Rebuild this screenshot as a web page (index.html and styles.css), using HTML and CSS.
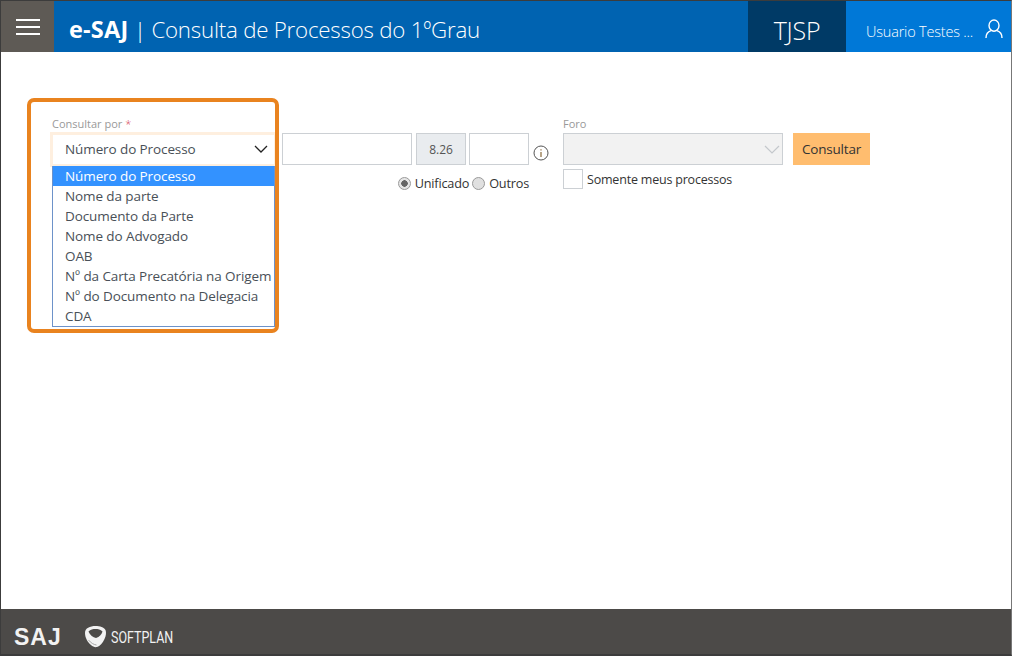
FILE: index.html
```html
<!DOCTYPE html>
<html lang="pt">
<head>
<meta charset="utf-8">
<title>e-SAJ</title>
<link rel="stylesheet" href="styles.css">
</head>
<body>
<div class="window">
  <header class="topbar">
    <button class="menu-btn" aria-label="Menu"><span></span><span></span><span></span></button>
    <h1 class="title"><b>e-SAJ</b> | Consulta de Processos do 1ºGrau</h1>
    <div class="court">TJSP</div>
    <div class="user">
      <span class="user-name">Usuario Testes ...</span>
      <svg class="user-icon" width="18" height="20" viewBox="0 0 18 20" fill="none" stroke="#fff" stroke-width="1.4"><ellipse cx="9" cy="6.6" rx="5" ry="5.6"/><path d="M1 19c0-4.200 2.800-6.600 5-7.300M17 19c0-4.200-2.800-6.600-5-7.300"/></svg>
    </div>
  </header>

  <main class="content">
    <form class="search">
      <div class="field field-type">
        <label class="label">Consultar por <em>*</em></label>
        <div class="select select-open">
          <span>Número do Processo</span>
          <svg width="14" height="8" viewBox="0 0 14 8" fill="none" stroke="#222" stroke-width="1.3"><path d="M1 1l6 6 6-6"/></svg>
        </div>
        <ul class="dropdown">
          <li class="active">Número do Processo</li>
          <li>Nome da parte</li>
          <li>Documento da Parte</li>
          <li>Nome do Advogado</li>
          <li>OAB</li>
          <li>Nº da Carta Precatória na Origem</li>
          <li>Nº do Documento na Delegacia</li>
          <li>CDA</li>
        </ul>
      </div>

      <div class="field field-number">
        <div class="number-row">
          <div class="input input-main"></div>
          <div class="input input-fixed">8.26</div>
          <div class="input input-end"></div>
          <svg class="info" width="16" height="16" viewBox="0 0 16 16" fill="none"><circle cx="8" cy="8" r="7" stroke="#555" stroke-width="1"/><path d="M8 7v5M8 4.200v1.400" stroke="#8a6a3a" stroke-width="1.200"/></svg>
        </div>
        <div class="radio-row">
          <span class="radio radio-on"></span><span class="radio-text">Unificado</span>
          <span class="radio"></span><span class="radio-text">Outros</span>
        </div>
      </div>

      <div class="field field-foro">
        <label class="label">Foro</label>
        <div class="select select-disabled">
          <svg width="16" height="9" viewBox="0 0 16 9" fill="none" stroke="#c4c8cc" stroke-width="1.200"><path d="M1 1l7 7 7-7"/></svg>
        </div>
        <div class="check-row"><span class="check"></span><span class="check-text">Somente meus processos</span></div>
      </div>

      <button type="button" class="submit">Consultar</button>
    </form>
    <div class="highlight"></div>
  </main>

  <footer class="footer">
    <span class="logo-saj">SAJ</span>
    <svg class="logo-mark" width="23" height="24" viewBox="0 0 23 24" fill="none"><path d="M11.500 1C6 1 1 3 1 8c0 5 3 9.500 6 12 2 1.800 4 2.500 6 2 3-1 5.500-3.500 7.500-8C22 11 22.500 7.500 21.500 5 20 2.300 16 1 11.500 1z" fill="#f2f2f2"/><path d="M4.500 6.500C6.500 4.500 9 4 11.500 4c2.500 0 5 .5 7 2.500-1 3-3 5.500-6.500 6.500C9 12.500 6 10 4.500 6.500z" fill="#4c4a48"/><path d="M4.500 15c2.500 3 5 4.500 8 5" stroke="#a8a8a8" stroke-width="1"/></svg>
    <span class="logo-softplan">SOFTPLAN</span>
  </footer>
</div>
</body>
</html>
```
FILE: styles.css
```css
* { box-sizing: border-box; }
html, body { margin: 0; padding: 0; height: 100%; background: #fff; }
body { font-family: "Open Sans", "Noto Sans", "Liberation Sans", sans-serif; color: #495057; overflow: hidden; }

.window {
  width: 1012px; height: 656px;
  display: flex; flex-direction: column;
  border: 1px solid #3c3c3c; border-bottom-width: 2px;
  border-right-color: #777;
}

.topbar { height: 51px; display: flex; align-items: stretch; background: #0063b1; flex: none; }
.menu-btn {
  width: 53px; background: #5e5a55; border: 0; padding: 0;
  display: flex; flex-direction: column; justify-content: center; align-items: center; gap: 5px;
}
.menu-btn span { display: block; width: 24px; height: 2px; background: #fff; }
.title { flex: 1; margin: 0 0 0 15px; align-self: center; font-size: 22.3px; font-weight: 300; color: #fff; white-space: nowrap; letter-spacing: -.22px; position: relative; top: 2px; }
.title b { font-weight: 700; font-size: 23.5px; letter-spacing: .2px; }
.court { width: 98px; background: #003a66; color: #fff; font-size: 25px; font-weight: 300; display: flex; align-items: center; justify-content: center; letter-spacing: -.2px; padding-top: 7px; }
.user { width: 165px; background: #0078d7; color: #fff; display: flex; align-items: center; padding-left: 20px; }
.user-name { font-size: 14.5px; font-weight: 300; letter-spacing: -.2px; white-space: nowrap; position: relative; top: 5px; }
.user-icon { margin-left: 12px; position: relative; top: 2px; }

.content { flex: 1; position: relative; }
.search { display: flex; align-items: flex-start; padding: 63px 0 0 51px; }
.field { position: relative; }
.label { display: block; height: 18px; font-size: 11px; line-height: 18px; color: #999; font-weight: 400; }
.label em { color: #d2334d; font-style: normal; font-weight: 300; }

.field-type { width: 224px; }
.select { height: 32px; display: flex; align-items: center; justify-content: space-between; }
.select-open { margin: -1px -2px 0 -2px; width: 227px; height: 35px; border: 3px solid #feefdf; background: #fff; padding: 0 6px 2px 12px; font-size: 13.5px; letter-spacing: -.1px; color: #495057; }
.dropdown {
  position: absolute; left: 0; top: 51px; width: 223px; margin: 0; padding: 0; list-style: none;
  background: #fff; border: 1px solid #6d92c9; border-top: 0;
  font-size: 13.5px; letter-spacing: -.1px; color: #495057; z-index: 2;
}
.dropdown li { height: 20px; line-height: 20px; padding-left: 12px; white-space: nowrap; }
.dropdown li.active { background: #3392ff; color: #fff; }

.field-number { margin-left: 6px; padding-top: 18px; width: 281px; }
.number-row { display: flex; align-items: center; }
.input { height: 32px; border: 1px solid #ccd0d4; background: #fff; }
.input-main { width: 130px; }
.input-fixed { width: 50px; margin-left: 4px; background: #e9ecef; font-size: 12px; text-align: center; line-height: 31px; color: #555; }
.input-end { width: 60px; margin-left: 3px; }
.info { margin-left: 4px; margin-top: 7px; }
.radio-row { display: flex; align-items: center; justify-content: flex-end; padding-right: 34px; margin-top: 9px; height: 18px; font-size: 12.7px; letter-spacing: -.2px; color: #333; }
.radio { width: 13px; height: 13px; border-radius: 50%; background: #e0e0e0; border: 1px solid #9a9a9a; margin-right: 4px; }
.radio-on { background: radial-gradient(circle, #666 0 3px, #e6e6e6 3.500px); }
.radio-text { margin-right: 3px; }
.radio-text:last-child { margin-right: 0; }

.field-foro { width: 220px; }
.select-disabled { width: 220px; background: #f2f2f2; border: 1px solid #ccd0d4; justify-content: flex-end; padding-right: 2px; }
.check-row { display: flex; align-items: center; margin-top: 4px; font-size: 12.500px; letter-spacing: -.2px; color: #333; }
.check { width: 20px; height: 20px; border: 1px solid #ccd0d4; margin-right: 4px; background: #fff; }

.submit { margin: 18px 0 0 10px; width: 77px; height: 32px; border: 0; padding: 0; background: #ffbd6f; color: #333; font: 13.5px "Open Sans", sans-serif; letter-spacing: -.2px; }

.highlight { position: absolute; left: 26px; top: 46px; width: 252px; height: 235px; border: 4px solid #e9831f; border-radius: 7px; pointer-events: none; }

.footer { margin-top: auto; height: 45px; flex: none; background: #4c4a48; display: flex; align-items: center; color: #f2f2f2; padding-left: 13px; }
.logo-saj { font-family: "Liberation Sans", sans-serif; font-weight: 700; font-size: 23px; letter-spacing: 1px; width: 70px; position: relative; top: 6px; }
.logo-mark { position: relative; top: 5px; flex: none; }
.logo-softplan { font-family: "Roboto", sans-serif; font-weight: 400; font-size: 16px; margin-left: 4px; position: relative; top: 6px; transform: scaleX(.78); transform-origin: left; }
```
